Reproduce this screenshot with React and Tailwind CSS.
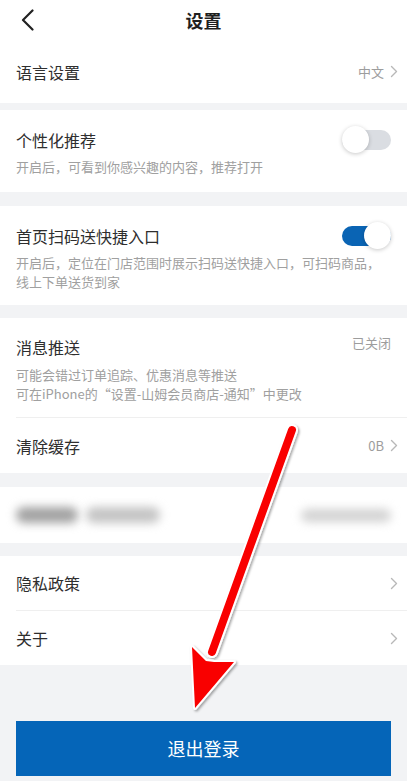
import React from 'react';

const font = { fontFamily: '"Noto Sans CJK SC", "Noto Sans", sans-serif' };

const Chevron = () => (
  <svg width="8" height="13" viewBox="0 0 8 13" className="ml-[6px]">
    <path d="M1.5 1.5 L6.5 6.5 L1.5 11.5" fill="none" stroke="#b8b8b8" strokeWidth="1.4" strokeLinecap="round" strokeLinejoin="round" />
  </svg>
);

const Toggle = ({ on }) => (
  <div className="relative w-[49px] h-[27px] flex items-center shrink-0">
    <div className={`w-full h-[20px] rounded-full ${on ? 'bg-[#0a64b4]' : 'bg-[#dadde2]'}`} />
    <div
      className={`absolute top-0 w-[27px] h-[27px] rounded-full bg-white shadow-[0_1px_4px_rgba(0,0,0,0.22)] ${
        on ? 'right-0' : 'left-0'
      }`}
    />
  </div>
);

const Band = ({ h = 'h-[13px]' }) => <div className={`${h} bg-[#f2f3f5]`} />;

const LinkRow = ({ label, value, h = 'h-[55px]' }) => (
  <div className={`${h} flex items-center justify-between pl-4 pr-[9px] bg-white`}>
    <span className="text-[16px] text-[#2e2e2e]">{label}</span>
    <div className="flex items-center text-[13px] text-[#9d9d9d]">
      {value && <span>{value}</span>}
      <Chevron />
    </div>
  </div>
);

const Arrow = () => (
  <svg className="absolute left-0 top-0 pointer-events-none" width="407" height="781" viewBox="0 0 407 781">
    <defs>
      <filter id="sh" x="-20%" y="-20%" width="140%" height="140%">
        <feDropShadow dx="1.5" dy="1.5" stdDeviation="1.2" floodColor="#000" floodOpacity="0.35" />
      </filter>
    </defs>
    <g filter="url(#sh)">
      <line x1="292" y1="430" x2="212" y2="652" stroke="#fff" strokeWidth="12" strokeLinecap="round" />
      <path d="M192 647 L206 661 L214 662 L234 662 L195 708 Z" fill="#fff" stroke="#fff" strokeWidth="4" strokeLinejoin="round" />
      <line x1="292" y1="430" x2="212" y2="652" stroke="#f90000" strokeWidth="8" strokeLinecap="round" />
      <path d="M192 647 L206 661 L214 662 L234 662 L195 708 Z" fill="#f90000" />
    </g>
  </svg>
);

export default function App() {
  return (
    <div className="relative w-[407px] h-[781px] overflow-hidden bg-[#f2f3f5]" style={font}>
      {/* header */}
      <div className="relative h-10 flex items-center justify-center bg-white">
        <svg className="absolute left-[20px] top-[9px]" width="16" height="22" viewBox="0 0 16 22">
          <path d="M12.5 1.5 L3 11 L12.5 20.5" fill="none" stroke="#222" strokeWidth="2.2" strokeLinecap="round" strokeLinejoin="round" />
        </svg>
        <span className="text-[18px] font-bold text-[#1f1f1f]">设置</span>
      </div>

      <LinkRow label="语言设置" value="中文" h="h-[63px]" />
      <Band h="h-[7px]" />

      <div className="bg-white px-4 pt-4 pb-4">
        <div className="flex items-center justify-between">
          <span className="text-[16px] text-[#2e2e2e]">个性化推荐</span>
          <Toggle on={false} />
        </div>
        <p className="mt-[4px] text-[13px] leading-[19px] text-[#a0a0a0]">开启后，可看到你感兴趣的内容，推荐打开</p>
      </div>
      <Band h="h-[14px]" />

      <div className="bg-white px-4 pt-4 pb-[14px]">
        <div className="flex items-center justify-between">
          <span className="text-[16px] text-[#2e2e2e]">首页扫码送快捷入口</span>
          <Toggle on />
        </div>
        <p className="mt-[4px] text-[13px] leading-[19px] text-[#a0a0a0]">
          开启后，定位在门店范围时展示扫码送快捷入口，可扫码商品，
          <br />
          线上下单送货到家
        </p>
      </div>
      <Band />

      <div className="bg-white">
        <div className="px-4 pt-4 pb-[14px]">
          <div className="flex items-start justify-between h-[27px]">
            <span className="text-[16px] leading-[27px] text-[#2e2e2e]">消息推送</span>
            <span className="text-[13px] leading-[18px] text-[#9d9d9d] mr-0">已关闭</span>
          </div>
          <p className="mt-[4px] text-[13px] leading-[19px] text-[#a0a0a0]">
            可能会错过订单追踪、优惠消息等推送
            <br />
            可在iPhone的“设置-山姆会员商店-通知”中更改
          </p>
        </div>
        <div className="ml-4 h-px bg-[#efefef]" />
        <LinkRow label="清除缓存" value="0B" h="h-[55px]" />
      </div>
      <Band h="h-[14px]" />

      {/* blurred row */}
      <div className="h-[56px] bg-white flex items-center justify-between px-4">
        <div className="flex items-center gap-2">
          <div className="w-[62px] h-[16px] rounded-full bg-[#a2a2a2] blur-[5px]" />
          <div className="w-[74px] h-[16px] rounded-full bg-[#c4c4c4] blur-[5px]" />
        </div>
        <div className="w-[90px] h-[13px] rounded-full bg-[#d2d2d2] blur-[5px]" />
      </div>
      <Band />

      <div className="bg-white">
        <LinkRow label="隐私政策" h="h-[54px]" />
        <div className="ml-4 h-px bg-[#efefef]" />
        <LinkRow label="关于" h="h-[54px]" />
      </div>

      <div className="px-4 pt-[56px]">
        <button className="w-full h-[55px] bg-[#0565b8] text-white text-[18px] flex items-center justify-center">
          退出登录
        </button>
      </div>

      <Arrow />
    </div>
  );
}
